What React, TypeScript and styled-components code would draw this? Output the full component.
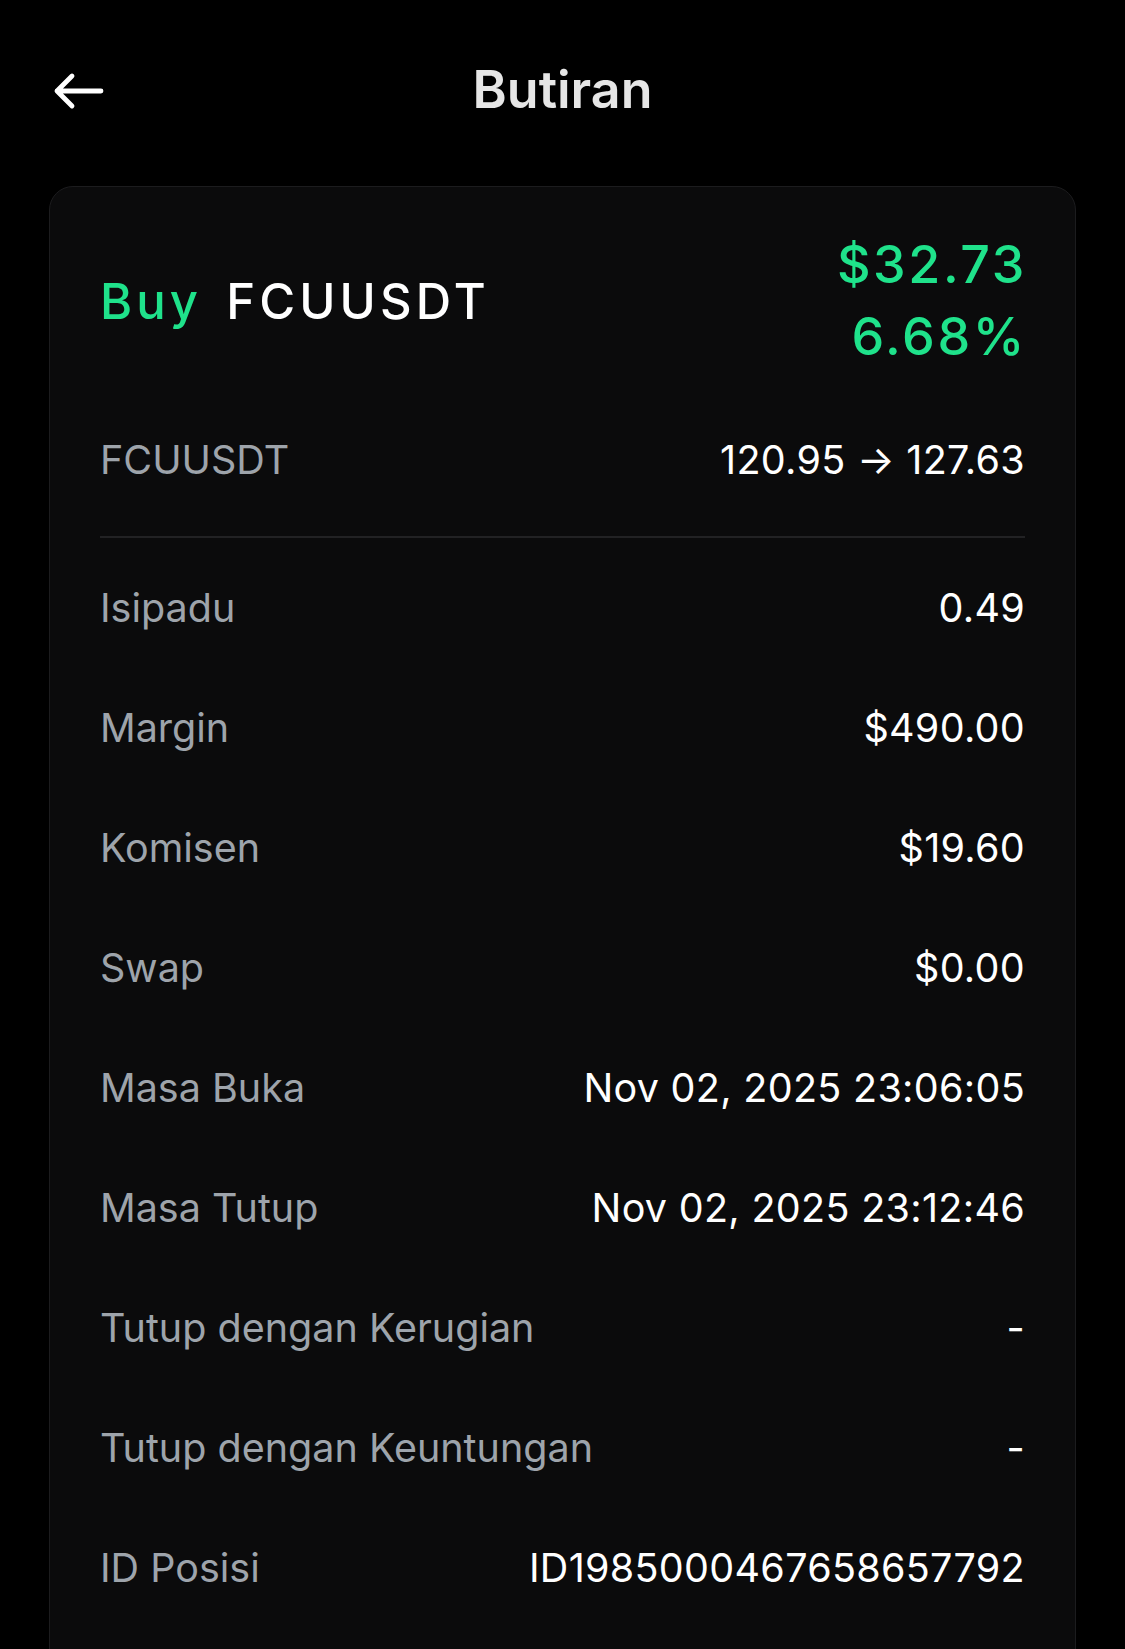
import React from "react";
import styled, { createGlobalStyle } from "styled-components";

const Global = createGlobalStyle`
  html, body { margin: 0; padding: 0; background: #000; }
  body { font-family: Inter, "Noto Sans", "Liberation Sans", sans-serif; color: #fff; }
  * { box-sizing: border-box; }
`;

const Page = styled.div`
  width: 1125px;
  height: 1649px;
  overflow: hidden;
  background: #000;
`;

const TopBar = styled.header`
  position: relative;
  height: 186px;
  display: flex;
  align-items: flex-start;
  justify-content: center;
  padding-top: 57px;
`;

const BackButton = styled.button`
  position: absolute;
  left: 48px;
  top: 69px;
  width: 60px;
  height: 44px;
  padding: 0;
  border: 0;
  background: transparent;
  display: flex;
  align-items: center;
  justify-content: center;
  cursor: pointer;
`;

const Title = styled.h1`
  margin: 0;
  font-size: 52px;
  line-height: 66px;
  font-weight: 600;
  color: #e6e6e6;
`;

const Card = styled.section`
  margin: 0 49px;
  min-height: 1500px;
  background: #0b0b0c;
  border: 1.5px solid #1c1c1e;
  border-radius: 24px;
  padding: 40px 50px 0 50px;
`;

const Summary = styled.div`
  height: 148px;
  display: flex;
  align-items: center;
  justify-content: space-between;
  margin-bottom: 25px;
`;

const Pair = styled.div`
  display: flex;
  align-items: baseline;
  gap: 24px;
  font-size: 49px;
  font-weight: 500;
  letter-spacing: 4.1px;
`;

const Side = styled.span`
  color: #1fe28b;
`;

const Symbol = styled.span`
  color: #ffffff;
`;

const Pnl = styled.div`
  display: flex;
  flex-direction: column;
  align-items: flex-end;
  font-size: 52px;
  line-height: 72px;
  font-weight: 500;
  letter-spacing: 2.6px;
  color: #1fe28b;
  margin-right: -2px;
`;

const Row = styled.div`
  height: 120px;
  display: flex;
  align-items: center;
  justify-content: space-between;
  font-size: 39.5px;
`;

const Label = styled.span`
  color: #9ea4ab;
`;

const Value = styled.span`
  color: #ffffff;
  letter-spacing: 0.3px;
`;

const Divider = styled.hr`
  margin: 16px 0 10px 0;
  border: 0;
  height: 2px;
  background: #222224;
`;

const rows: [string, string][] = [
  ["Isipadu", "0.49"],
  ["Margin", "$490.00"],
  ["Komisen", "$19.60"],
  ["Swap", "$0.00"],
  ["Masa Buka", "Nov 02, 2025 23:06:05"],
  ["Masa Tutup", "Nov 02, 2025 23:12:46"],
  ["Tutup dengan Kerugian", "-"],
  ["Tutup dengan Keuntungan", "-"],
  ["ID Posisi", "ID1985000467658657792"],
];

export default function App() {
  return (
    <Page>
      <Global />
      <TopBar>
        <BackButton aria-label="Kembali">
          <svg width="52" height="38" viewBox="0 0 52 38" fill="none">
            <path
              d="M49 19H5M20 4L5 19L20 34"
              stroke="#fff"
              strokeWidth="4.8"
              strokeLinecap="round"
              strokeLinejoin="round"
            />
          </svg>
        </BackButton>
        <Title>Butiran</Title>
      </TopBar>
      <Card>
        <Summary>
          <Pair>
            <Side>Buy</Side>
            <Symbol>FCUUSDT</Symbol>
          </Pair>
          <Pnl>
            <span>$32.73</span>
            <span>6.68%</span>
          </Pnl>
        </Summary>
        <Row>
          <Label>FCUUSDT</Label>
          <Value>120.95 → 127.63</Value>
        </Row>
        <Divider />
        {rows.map(([l, v]) => (
          <Row key={l}>
            <Label>{l}</Label>
            <Value>{v}</Value>
          </Row>
        ))}
      </Card>
    </Page>
  );
}
